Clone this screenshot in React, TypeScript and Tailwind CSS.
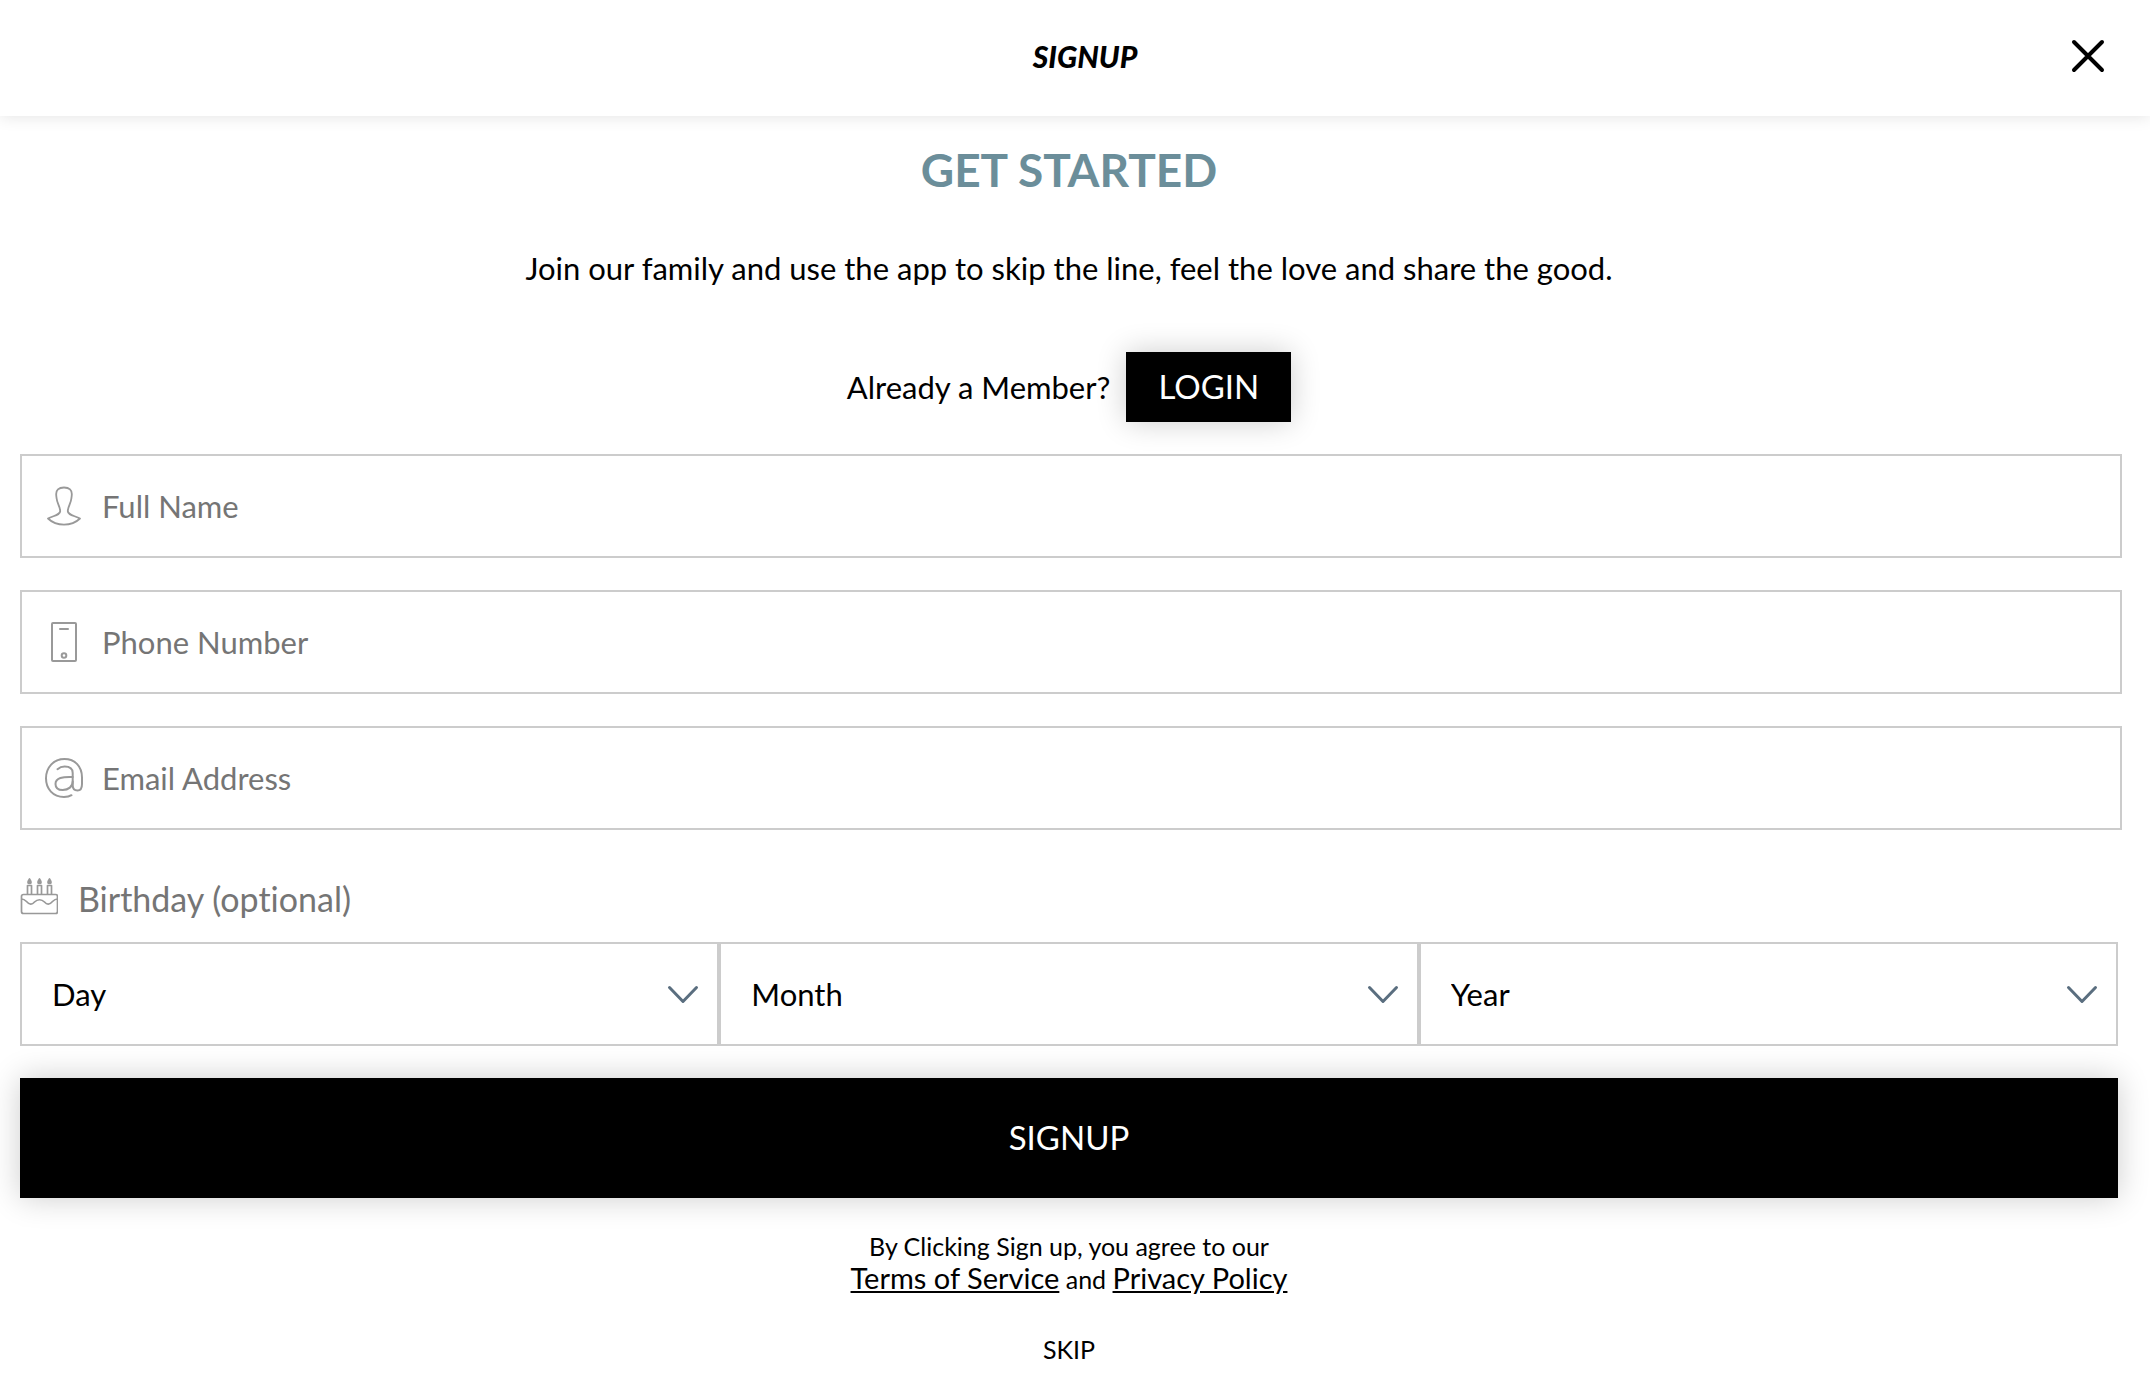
import type { ReactNode } from "react";

function UserIcon() {
  return (
    <svg viewBox="0 0 40 40" className="size-10" fill="none" stroke="#999" strokeWidth="1.8" strokeLinejoin="round" aria-hidden="true">
      <path d="M20 1.5c-5.500 0-8 2.500-7.800 7 0 1.500.3 3 .5 4.300.3 4.500 3.300 7.500 3.500 12.200.2 4-6.700 4.600-12.200 7.500 4.500 4.300 10 6.200 16 6.200s11.500-1.900 16-6.200c-5.500-2.900-12.400-3.500-12.200-7.500.2-4.700 3.200-7.700 3.500-12.200.2-1.300.5-2.800.5-4.300.2-4.500-2.300-7-7.800-7z" />
    </svg>
  );
}

function PhoneIcon() {
  return (
    <svg viewBox="0 0 40 40" className="size-10" fill="none" stroke="#999" strokeWidth="2" strokeLinecap="round" aria-hidden="true">
      <rect x="8" y="1" width="24" height="38" rx="1" />
      <path d="M16 7h8" />
      <circle cx="20" cy="33.500" r="2.300" />
    </svg>
  );
}

function AtIcon() {
  return (
    <svg viewBox="0 0 40 40" className="size-10" fill="none" stroke="#999" strokeWidth="2" strokeLinecap="round" aria-hidden="true">
      <path d="M27.500 37.200C25.500 38.500 23 39 20 39 9 39 2 31 2 20.300 2 9.500 9.500 1 20.500 1 31 1 38 8.500 38 19.500V26c0 4.500-1.500 6.500-4.500 6.500s-4.800-2-4.800-5.500V15c0-4-2.700-6.500-8-6.500-3 0-5.200.9-7.200 2.700" />
      <path d="M28.700 19c-10-.5-17.200 1-17.200 6.900 0 4 3 6.100 7.200 6.100 5.800 0 10-3.500 10-8.500" />
    </svg>
  );
}

function CakeIcon() {
  return (
    <svg viewBox="0 0 38 38" className="mb-1 size-[38px]" fill="none" stroke="#999" strokeWidth="1.700" strokeLinejoin="round" aria-hidden="true">
      <rect x="1.500" y="17.500" width="36" height="19" rx="2" />
      <path d="M1.500 22c2 0 3 .5 5 2.500 3 3.500 5.500 3.500 8 .5 3-3 7-3 10 0 2.500 3 5 3 8-.5 2-2 3-2.500 5-2.500" />
      <path d="M7.500 17V8.500h4V17M17.500 17V8.500h4V17M27.500 17V8.500h4V17" />
      <path fill="#999" d="M9.500 2c-2 3-2 4.500 0 4.500s2-1.500 0-4.500zM19.500 2c-2 3-2 4.500 0 4.500s2-1.500 0-4.500zM29.500 2c-2 3-2 4.500 0 4.500s2-1.500 0-4.500z" />
    </svg>
  );
}

function Field({ id, label, type, icon }: { id: string; label: string; type: string; icon: ReactNode }) {
  return (
    <label htmlFor={id} className="flex h-[104px] items-center gap-[18px] border-2 border-[#ccc] bg-white pl-[22px]">
      {icon}
      <input
        id={id}
        type={type}
        aria-label={label}
        placeholder={label}
        className="h-full min-w-0 flex-1 bg-transparent text-[31px] outline-none placeholder:text-[#757575]"
      />
    </label>
  );
}

function DatePart({ label, options }: { label: string; options: (string | number)[] }) {
  return (
    <div className="grid items-center">
      <select
        aria-label={label}
        defaultValue=""
        className="col-start-1 row-start-1 h-[104px] w-full appearance-none border-2 border-[#ccc] bg-white px-[30px] text-[31px] text-black outline-none"
      >
        <option value="">{label}</option>
        {options.map((o) => (
          <option key={o}>{o}</option>
        ))}
      </select>
      <svg
        viewBox="0 0 32 20"
        className="pointer-events-none col-start-1 row-start-1 mr-5 h-5 w-8 justify-self-end"
        fill="none"
        stroke="#5a6e7f"
        strokeWidth="3"
        strokeLinecap="round"
        strokeLinejoin="round"
        aria-hidden="true"
      >
        <path d="M2.500 3.500 16 17.500 29.500 3.500" />
      </svg>
    </div>
  );
}

const days = Array.from({ length: 31 }, (_, i) => i + 1);
const months = ["January", "February", "March", "April", "May", "June", "July", "August", "September", "October", "November", "December"];
const years = Array.from({ length: 100 }, (_, i) => 2020 - i);

export default function App() {
  return (
    <div className="min-h-screen bg-white font-['Lato','Open_Sans',sans-serif] text-black [font-variant-ligatures:none]">
      <header className="grid h-[116px] grid-cols-[1fr_auto_1fr] items-center pr-11 pb-1 pl-16 shadow-[0_0_16px_rgba(0,0,0,0.12)]">
        <span className="col-start-2 text-[30px] font-black italic">SIGNUP</span>
        <button type="button" aria-label="Close" className="justify-self-end">
          <svg viewBox="0 0 36 36" className="size-9" fill="none" stroke="#000" strokeWidth="4" strokeLinecap="round" aria-hidden="true">
            <path d="M4 4 32 32M32 4 4 32" />
          </svg>
        </button>
      </header>

      <main className="pt-6 pr-8 pb-4 pl-5 text-center">
        <h1 className="text-[46px] leading-[60px] font-bold text-[#6b8e9a]">GET STARTED</h1>
        <p className="mt-12 text-[31px] leading-10">
          Join our family and use the app to skip the line, feel the love and share the good.
        </p>
        <div className="mt-16 flex items-center justify-center gap-4">
          <span className="text-[31px]">Already a Member?</span>
          <button type="button" className="h-[70px] bg-black px-8 text-[33px] text-white shadow-[0_0_30px_rgba(0,0,0,0.2)]">
            LOGIN
          </button>
        </div>

        <form className="mt-8" onSubmit={(e) => e.preventDefault()}>
          <div className="-mr-1 flex flex-col gap-8 text-left">
            <Field id="name" label="Full Name" type="text" icon={<UserIcon />} />
            <Field id="phone" label="Phone Number" type="tel" icon={<PhoneIcon />} />
            <Field id="email" label="Email Address" type="email" icon={<AtIcon />} />
          </div>

          <fieldset className="mt-11 text-left">
            <legend className="flex h-12 items-center gap-5 text-[34px] text-[#757575]">
              <CakeIcon />
              Birthday (optional)
            </legend>
            <div className="mt-5 grid grid-cols-3">
              <DatePart label="Day" options={days} />
              <DatePart label="Month" options={months} />
              <DatePart label="Year" options={years} />
            </div>
          </fieldset>

          <button type="submit" className="mt-8 h-[120px] w-full bg-black text-[33px] text-white shadow-[0_0_30px_rgba(0,0,0,0.2)]">
            SIGNUP
          </button>
        </form>

        <p className="mt-8 text-[25px] leading-8">
          By Clicking Sign up, you agree to our
          <br />
          <a href="#terms" className="text-[29px] underline">Terms of Service</a> and{" "}
          <a href="#privacy" className="text-[29px] underline">Privacy Policy</a>
        </p>
        <button type="button" className="mt-9 text-[25px] leading-9">SKIP</button>
      </main>
    </div>
  );
}
